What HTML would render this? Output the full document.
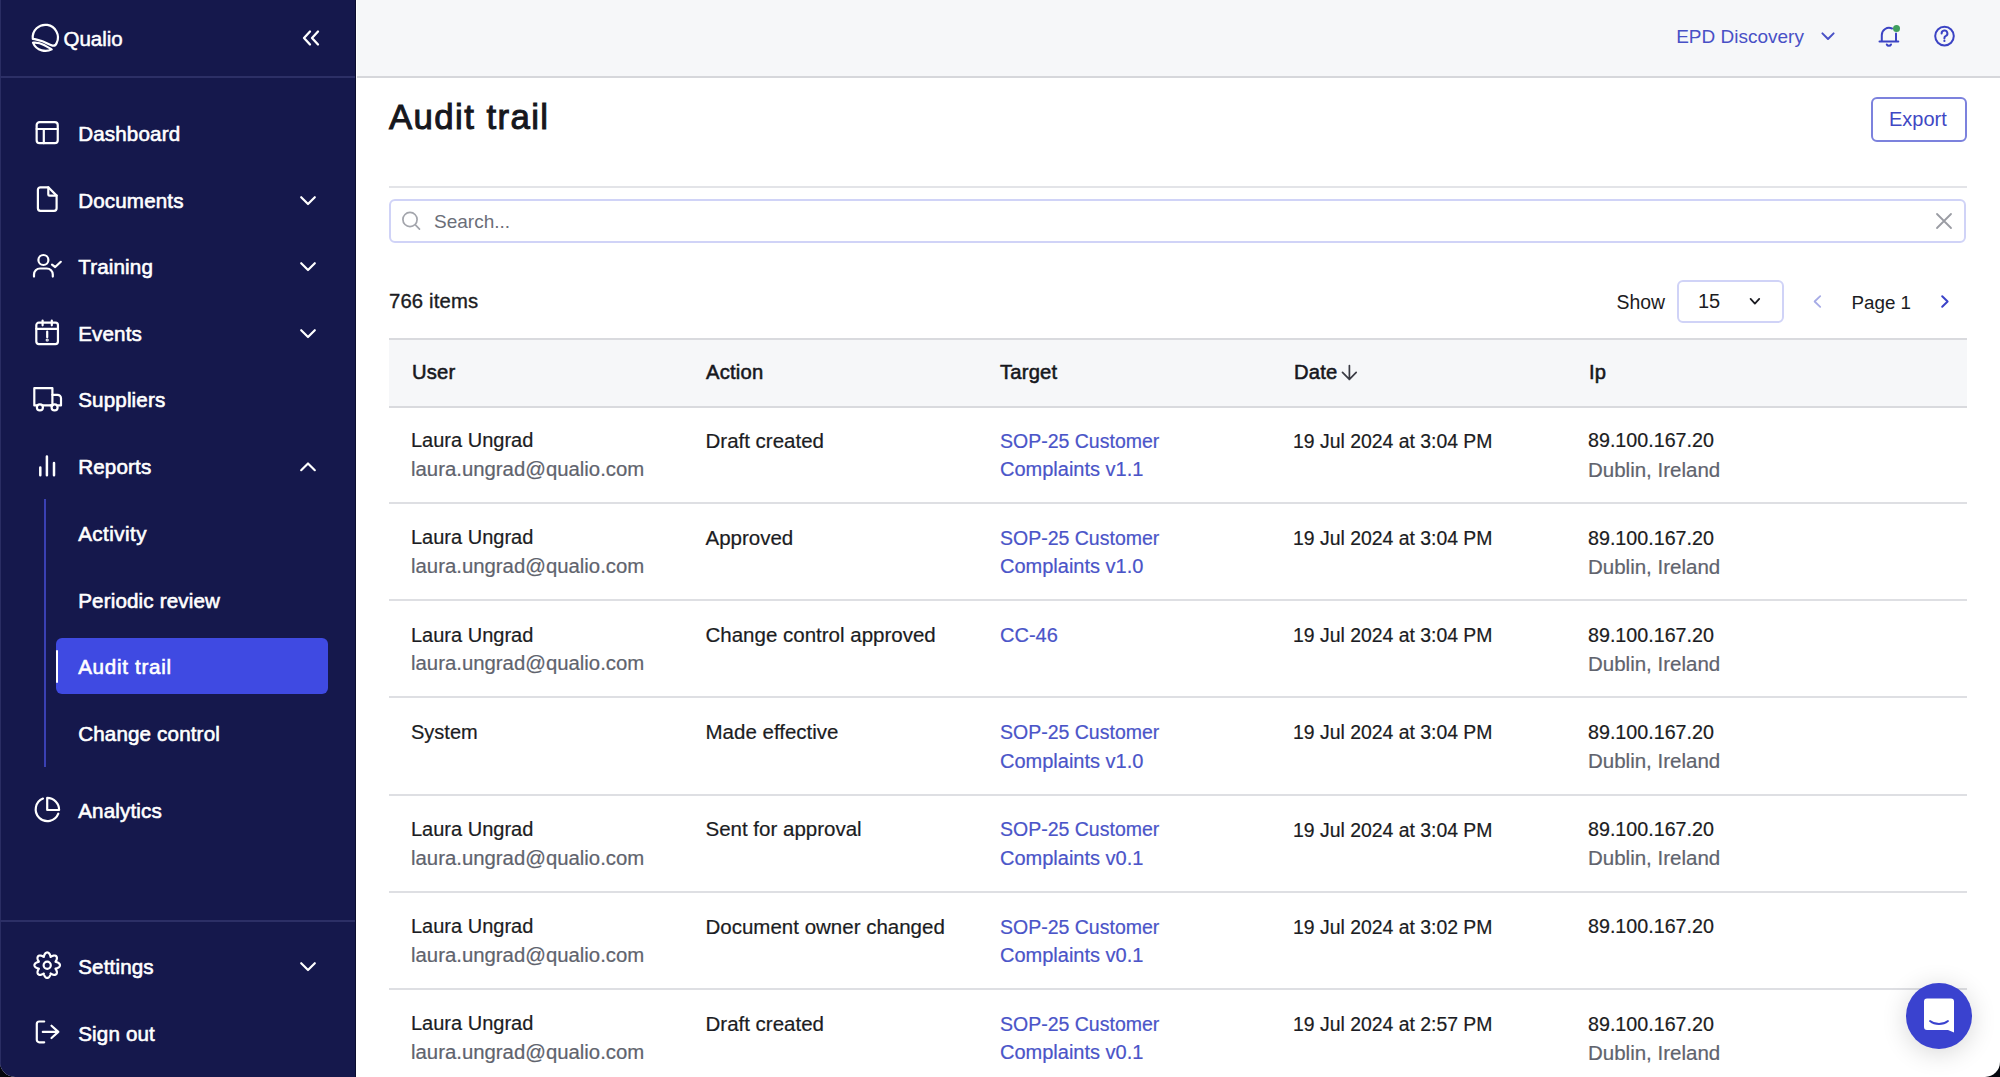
<!DOCTYPE html>
<html><head><meta charset="utf-8">
<style>
*{box-sizing:border-box;margin:0;padding:0}
html,body{width:2000px;height:1077px;overflow:hidden;background:#05070d;font-family:"Liberation Sans",sans-serif}
#win{position:absolute;left:0;top:0;width:2000px;height:1077px;overflow:hidden;border-radius:0 0 15px 15px;background:#fff}
.a{position:absolute;white-space:nowrap}
svg{position:absolute;overflow:visible}
</style></head><body><div id="win">
<div class="a" style="left:0;top:0;width:355px;height:1077px;background:#15184c"></div>
<div class="a" style="left:355px;top:0;width:1px;height:1077px;background:#0b0d2e"></div>
<div class="a" style="left:0;top:0;width:1px;height:1077px;background:#2a2d63"></div>
<div class="a" style="left:0;top:76px;width:355px;height:2px;background:#2c2f66"></div>
<div class="a" style="left:0;top:920px;width:355px;height:2px;background:#2c2f66"></div>
<svg style="left:30.5px;top:23.2px" width="30" height="30" viewBox="0 0 30 30" fill="none" stroke="#fff" stroke-width="2.2" stroke-linecap="round" stroke-linejoin="round">
<path d="M1.8 15.8 A12.6 12.6 0 1 1 25.8 19.6 C25 22 23.4 23.1 21.5 22.6 C17.5 21.6 13.5 18.4 9.4 17.6 C6.5 16.9 4 15.9 1.8 15.8 Z"/>
<path d="M2 19.7 C5.5 19.3 9 19.8 13 22 C16 23.6 18.5 25.2 20.7 26.4 C15.5 29.3 5.5 28.5 2 19.7 Z"/>
</svg>
<div class="a" style="left:63.5px;top:26.08px;font-size:20.5px;line-height:25.62px;color:#ffffff;font-weight:normal;-webkit-text-stroke:0.5px #fff;">Qualio</div>
<svg style="left:302px;top:30px" width="20" height="16" viewBox="0 0 20 16" fill="none" stroke="#fff" stroke-width="2.3" stroke-linecap="round" stroke-linejoin="round">
<path d="M8 1.5 L2 8 L8 14.5"/><path d="M16 1.5 L10 8 L16 14.5"/></svg>
<div class="a" style="left:78.2px;top:121.18px;font-size:20.6px;line-height:25.75px;color:#ffffff;font-weight:normal;-webkit-text-stroke:0.6px #fff;letter-spacing:0.15px;">Dashboard</div>
<div class="a" style="left:78.2px;top:187.68px;font-size:20.6px;line-height:25.75px;color:#ffffff;font-weight:normal;-webkit-text-stroke:0.6px #fff;letter-spacing:0.15px;">Documents</div>
<div class="a" style="left:78.2px;top:254.18px;font-size:20.6px;line-height:25.75px;color:#ffffff;font-weight:normal;-webkit-text-stroke:0.6px #fff;letter-spacing:0.15px;">Training</div>
<div class="a" style="left:78.2px;top:320.68px;font-size:20.6px;line-height:25.75px;color:#ffffff;font-weight:normal;-webkit-text-stroke:0.6px #fff;letter-spacing:0.15px;">Events</div>
<div class="a" style="left:78.2px;top:387.18px;font-size:20.6px;line-height:25.75px;color:#ffffff;font-weight:normal;-webkit-text-stroke:0.6px #fff;letter-spacing:0.15px;">Suppliers</div>
<div class="a" style="left:78.2px;top:453.68px;font-size:20.6px;line-height:25.75px;color:#ffffff;font-weight:normal;-webkit-text-stroke:0.6px #fff;letter-spacing:0.15px;">Reports</div>
<svg style="left:300px;top:195.6px" width="16" height="9.5" viewBox="0 0 16 9.5" fill="none" stroke="#fff" stroke-width="2.2" stroke-linecap="round" stroke-linejoin="round"><path d="M1.2 1.2 L8 8 L14.8 1.2"/></svg>
<svg style="left:300px;top:262.1px" width="16" height="9.5" viewBox="0 0 16 9.5" fill="none" stroke="#fff" stroke-width="2.2" stroke-linecap="round" stroke-linejoin="round"><path d="M1.2 1.2 L8 8 L14.8 1.2"/></svg>
<svg style="left:300px;top:328.6px" width="16" height="9.5" viewBox="0 0 16 9.5" fill="none" stroke="#fff" stroke-width="2.2" stroke-linecap="round" stroke-linejoin="round"><path d="M1.2 1.2 L8 8 L14.8 1.2"/></svg>
<svg style="left:300px;top:461.6px" width="16" height="9.5" viewBox="0 0 16 9.5" fill="none" stroke="#fff" stroke-width="2.2" stroke-linecap="round" stroke-linejoin="round"><path d="M1.2 8.2 L8 1.5 L14.8 8.2"/></svg>
<svg style="left:35px;top:120px" width="25" height="25" viewBox="0 0 25 25" fill="none" stroke="#fff" stroke-width="2.2" stroke-linecap="round" stroke-linejoin="round"><rect x="1.65" y="2.05" width="21.1" height="21.1" rx="3"/><path d="M1.65 9 H22.75 M8.8 9 V23.15"/></svg>
<svg style="left:35px;top:185px" width="25" height="28" viewBox="0 0 25 28" fill="none" stroke="#fff" stroke-width="2.2" stroke-linecap="round" stroke-linejoin="round"><path d="M13.3 2.3 H5.4 A2.5 2.5 0 0 0 2.9 4.8 V23.3 A2.5 2.5 0 0 0 5.4 25.8 H19.1 A2.5 2.5 0 0 0 21.6 23.3 V10.6 Z"/><path d="M13.3 2.3 V9.4 A1.2 1.2 0 0 0 14.5 10.6 H21.6"/></svg>
<svg style="left:32px;top:253px" width="31" height="26" viewBox="0 0 31 26" fill="none" stroke="#fff" stroke-width="2.2" stroke-linecap="round" stroke-linejoin="round"><circle cx="11.4" cy="7" r="5"/><path d="M2 23.6 V21.5 A6 6 0 0 1 8 15.5 H14.8 A6 6 0 0 1 20.8 21.5 V23.6"/><path d="M20 11.6 L23.2 14 L28.8 8.8"/></svg>
<svg style="left:34px;top:318px" width="27" height="28" viewBox="0 0 27 28" fill="none" stroke="#fff" stroke-width="2.2" stroke-linecap="round" stroke-linejoin="round"><rect x="2.3" y="4.7" width="21.65" height="21.4" rx="2.5"/><path d="M2.3 10.8 H23.95 M8.6 2.6 V7.3 M17.8 2.6 V7.3 M13.2 13.6 V19.2"/><circle cx="13.2" cy="22" r="0.5" fill="#fff"/></svg>
<svg style="left:32px;top:386px" width="31" height="27" viewBox="0 0 31 27" fill="none" stroke="#fff" stroke-width="2.2" stroke-linecap="round" stroke-linejoin="round"><path d="M5 19.4 H2.3 V2.2 H20.4 V19.4 H11"/><path d="M20.4 8.8 H25.5 A3.5 3.5 0 0 1 29 12.3 V19.4 H26.4 M20.4 19.4 H18.5"/><circle cx="7.9" cy="21.4" r="3"/><circle cx="22.6" cy="21.4" r="3"/></svg>
<svg style="left:38.4px;top:454px" width="19" height="23" viewBox="0 0 19 23" stroke="#fff" stroke-width="2.5" stroke-linecap="round" fill="none"><path d="M2.3 13.6 V21.3 M8.9 2.5 V21.3 M16 9 V21.3"/></svg>
<div class="a" style="left:44px;top:499px;width:2px;height:268px;background:#3a40b3"></div>
<div class="a" style="left:55.5px;top:638.4px;width:272.5px;height:55.3px;background:#3f4ae2;border-radius:6px"></div>
<div class="a" style="left:55.6px;top:649.5px;width:2.8px;height:33.5px;background:#fff;border-radius:2px"></div>
<div class="a" style="left:78.2px;top:521.18px;font-size:20.6px;line-height:25.75px;color:#ffffff;font-weight:normal;-webkit-text-stroke:0.6px #fff;letter-spacing:0.45px;">Activity</div>
<div class="a" style="left:78.2px;top:587.68px;font-size:20.6px;line-height:25.75px;color:#ffffff;font-weight:normal;-webkit-text-stroke:0.6px #fff;letter-spacing:0.15px;">Periodic review</div>
<div class="a" style="left:78.2px;top:654.18px;font-size:20.6px;line-height:25.75px;color:#ffffff;font-weight:normal;-webkit-text-stroke:0.6px #fff;letter-spacing:0.7px;">Audit trail</div>
<div class="a" style="left:78.2px;top:720.68px;font-size:20.6px;line-height:25.75px;color:#ffffff;font-weight:normal;-webkit-text-stroke:0.6px #fff;letter-spacing:0.15px;">Change control</div>
<div class="a" style="left:78.2px;top:797.98px;font-size:20.6px;line-height:25.75px;color:#ffffff;font-weight:normal;-webkit-text-stroke:0.6px #fff;letter-spacing:0.15px;">Analytics</div>
<svg style="left:33px;top:796px" width="28" height="28" viewBox="0 0 28 28" fill="none" stroke="#fff" stroke-width="2.2" stroke-linecap="round" stroke-linejoin="round"><path d="M10 2.6 A11.7 11.7 0 1 0 25.3 17.7"/><path d="M14.2 1.9 V14 H26.1 A11.9 11.9 0 0 0 14.2 1.9 Z"/></svg>
<div class="a" style="left:78.2px;top:954.18px;font-size:20.6px;line-height:25.75px;color:#ffffff;font-weight:normal;-webkit-text-stroke:0.6px #fff;letter-spacing:0.15px;">Settings</div>
<svg style="left:300px;top:962.1px" width="16" height="9.5" viewBox="0 0 16 9.5" fill="none" stroke="#fff" stroke-width="2.2" stroke-linecap="round" stroke-linejoin="round"><path d="M1.2 1.2 L8 8 L14.8 1.2"/></svg>
<svg style="left:33px;top:951px" width="29" height="29" viewBox="0 0 29 29" fill="none" stroke="#fff" stroke-width="2.2" stroke-linecap="round" stroke-linejoin="round"><path d="M14.20 1.45 L14.53 1.48 L14.86 1.56 L15.18 1.69 L15.50 1.87 L15.79 2.10 L16.07 2.38 L16.33 2.69 L16.57 3.04 L16.79 3.42 L16.98 3.82 L17.15 4.23 L17.30 4.66 L17.43 5.09 L17.54 5.51 L17.64 5.89 L17.99 5.69 L18.36 5.48 L18.75 5.26 L19.16 5.07 L19.57 4.89 L19.99 4.74 L20.41 4.63 L20.83 4.55 L21.24 4.52 L21.63 4.52 L22.00 4.57 L22.35 4.66 L22.67 4.79 L22.96 4.97 L23.22 5.18 L23.43 5.44 L23.61 5.73 L23.74 6.05 L23.83 6.40 L23.88 6.77 L23.88 7.16 L23.85 7.57 L23.77 7.99 L23.66 8.41 L23.51 8.83 L23.33 9.24 L23.14 9.65 L22.92 10.04 L22.71 10.41 L22.51 10.76 L22.89 10.86 L23.31 10.97 L23.74 11.10 L24.17 11.25 L24.58 11.42 L24.98 11.61 L25.36 11.83 L25.71 12.07 L26.02 12.33 L26.30 12.61 L26.53 12.90 L26.71 13.22 L26.84 13.54 L26.92 13.87 L26.95 14.20 L26.92 14.53 L26.84 14.86 L26.71 15.18 L26.53 15.50 L26.30 15.79 L26.02 16.07 L25.71 16.33 L25.36 16.57 L24.98 16.79 L24.58 16.98 L24.17 17.15 L23.74 17.30 L23.31 17.43 L22.89 17.54 L22.51 17.64 L22.71 17.99 L22.92 18.36 L23.14 18.75 L23.33 19.16 L23.51 19.57 L23.66 19.99 L23.77 20.41 L23.85 20.83 L23.88 21.24 L23.88 21.63 L23.83 22.00 L23.74 22.35 L23.61 22.67 L23.43 22.96 L23.22 23.22 L22.96 23.43 L22.67 23.61 L22.35 23.74 L22.00 23.83 L21.63 23.88 L21.24 23.88 L20.83 23.85 L20.41 23.77 L19.99 23.66 L19.57 23.51 L19.16 23.33 L18.75 23.14 L18.36 22.92 L17.99 22.71 L17.64 22.51 L17.54 22.89 L17.43 23.31 L17.30 23.74 L17.15 24.17 L16.98 24.58 L16.79 24.98 L16.57 25.36 L16.33 25.71 L16.07 26.02 L15.79 26.30 L15.50 26.53 L15.18 26.71 L14.86 26.84 L14.53 26.92 L14.20 26.95 L13.87 26.92 L13.54 26.84 L13.22 26.71 L12.90 26.53 L12.61 26.30 L12.33 26.02 L12.07 25.71 L11.83 25.36 L11.61 24.98 L11.42 24.58 L11.25 24.17 L11.10 23.74 L10.97 23.31 L10.86 22.89 L10.76 22.51 L10.41 22.71 L10.04 22.92 L9.65 23.14 L9.24 23.33 L8.83 23.51 L8.41 23.66 L7.99 23.77 L7.57 23.85 L7.16 23.88 L6.77 23.88 L6.40 23.83 L6.05 23.74 L5.73 23.61 L5.44 23.43 L5.18 23.22 L4.97 22.96 L4.79 22.67 L4.66 22.35 L4.57 22.00 L4.52 21.63 L4.52 21.24 L4.55 20.83 L4.63 20.41 L4.74 19.99 L4.89 19.57 L5.07 19.16 L5.26 18.75 L5.48 18.36 L5.69 17.99 L5.89 17.64 L5.51 17.54 L5.09 17.43 L4.66 17.30 L4.23 17.15 L3.82 16.98 L3.42 16.79 L3.04 16.57 L2.69 16.33 L2.38 16.07 L2.10 15.79 L1.87 15.50 L1.69 15.18 L1.56 14.86 L1.48 14.53 L1.45 14.20 L1.48 13.87 L1.56 13.54 L1.69 13.22 L1.87 12.90 L2.10 12.61 L2.38 12.33 L2.69 12.07 L3.04 11.83 L3.42 11.61 L3.82 11.42 L4.23 11.25 L4.66 11.10 L5.09 10.97 L5.51 10.86 L5.89 10.76 L5.69 10.41 L5.48 10.04 L5.26 9.65 L5.07 9.24 L4.89 8.83 L4.74 8.41 L4.63 7.99 L4.55 7.57 L4.52 7.16 L4.52 6.77 L4.57 6.40 L4.66 6.05 L4.79 5.73 L4.97 5.44 L5.18 5.18 L5.44 4.97 L5.73 4.79 L6.05 4.66 L6.40 4.57 L6.77 4.52 L7.16 4.52 L7.57 4.55 L7.99 4.63 L8.41 4.74 L8.83 4.89 L9.24 5.07 L9.65 5.26 L10.04 5.48 L10.41 5.69 L10.76 5.89 L10.86 5.51 L10.97 5.09 L11.10 4.66 L11.25 4.23 L11.42 3.82 L11.61 3.42 L11.83 3.04 L12.07 2.69 L12.33 2.38 L12.61 2.10 L12.90 1.87 L13.22 1.69 L13.54 1.56 L13.87 1.48 Z"/><circle cx="14.2" cy="14.2" r="3.6"/></svg>
<div class="a" style="left:78.2px;top:1020.58px;font-size:20.6px;line-height:25.75px;color:#ffffff;font-weight:normal;-webkit-text-stroke:0.6px #fff;letter-spacing:0.15px;">Sign out</div>
<svg style="left:34px;top:1018px" width="27" height="27" viewBox="0 0 27 27" fill="none" stroke="#fff" stroke-width="2.2" stroke-linecap="round" stroke-linejoin="round"><path d="M10.2 3.5 H5.3 A2.5 2.5 0 0 0 2.8 6 V21.8 A2.5 2.5 0 0 0 5.3 24.3 H10.2"/><path d="M8.8 13.9 H24.3 M17.5 7.7 L24.3 13.9 L17.5 20"/></svg>
<div class="a" style="left:357px;top:0;width:1643px;height:76px;background:#f6f7f9"></div>
<div class="a" style="left:357px;top:76px;width:1643px;height:2px;background:#d6d7db"></div>
<div class="a" style="left:1676.2px;top:25.14px;font-size:19px;line-height:23.75px;color:#4850c6;font-weight:normal;">EPD Discovery</div>
<svg style="left:1820px;top:31px" width="16" height="10" viewBox="0 0 16 10" fill="none" stroke="#4850c6" stroke-width="2" stroke-linecap="round" stroke-linejoin="round"><path d="M2.4 2.4 L8 8 L13.6 2.4"/></svg>
<svg style="left:1876px;top:24px" width="26" height="24" viewBox="0 0 26 24" fill="none" stroke="#3b43c4" stroke-width="2" stroke-linecap="round" stroke-linejoin="round"><path d="M3.5 17.6 H22.3 M5.8 17.4 V11 A7.2 7.2 0 0 1 16 4.5 M20 9.5 V17.4"/><path d="M10.8 20.5 A2.3 2.3 0 0 0 15 20.5"/></svg>
<div class="a" style="left:1892.8px;top:25.1px;width:7px;height:7px;border-radius:50%;background:#3f9f5e"></div>
<svg style="left:1932px;top:24px" width="25" height="25" viewBox="0 0 25 25" fill="none" stroke="#3b43c4" stroke-width="2" stroke-linecap="round" stroke-linejoin="round"><circle cx="12.5" cy="12.1" r="9.3"/><path d="M9.6 9.4 A2.9 2.9 0 1 1 13.6 12.1 C12.8 12.5 12.4 13 12.4 13.9 V14.5"/><circle cx="12.4" cy="16.9" r="1.1" fill="#3b43c4" stroke="none"/></svg>
<div class="a" style="left:389px;top:94.98px;font-size:34.8px;line-height:43.5px;color:#16171d;font-weight:normal;-webkit-text-stroke:1px #16171d;letter-spacing:1.4px;">Audit trail</div>
<div class="a" style="left:1871px;top:97px;width:95.5px;height:44.5px;border:2px solid #7c82dd;border-radius:6px;background:#fff"></div>
<div class="a" style="left:1889px;top:106.97px;font-size:20px;line-height:25.0px;color:#3f48c4;font-weight:normal;">Export</div>
<div class="a" style="left:389px;top:185.8px;width:1577.5px;height:2px;background:#e3e4e8"></div>
<div class="a" style="left:389px;top:198.6px;width:1577px;height:44px;border:2px solid #d0d3f7;border-radius:6px;background:#fff"></div>
<svg style="left:400px;top:210px" width="24" height="24" viewBox="0 0 24 24" fill="none" stroke="#a3a5ac" stroke-width="1.7" stroke-linecap="round"><circle cx="10" cy="9.5" r="7.1"/><path d="M15.4 14.9 L19.5 19.2"/></svg>
<div class="a" style="left:434px;top:210.14px;font-size:19px;line-height:23.75px;color:#6b6e78;font-weight:normal;">Search...</div>
<svg style="left:1935px;top:212px" width="18" height="18" viewBox="0 0 18 18" fill="none" stroke="#9a9ca3" stroke-width="1.8" stroke-linecap="round"><path d="M2 2 L16 16 M16 2 L2 16"/></svg>
<div class="a" style="left:389px;top:289.47px;font-size:20.3px;line-height:25.38px;color:#1b1c22;font-weight:normal;-webkit-text-stroke:0.35px #1b1c22;letter-spacing:0.15px;">766 items</div>
<div class="a" style="left:1616.5px;top:289.95px;font-size:19.4px;line-height:24.25px;color:#1b1c22;font-weight:normal;">Show</div>
<div class="a" style="left:1677px;top:279.5px;width:106.5px;height:43.5px;border:2px solid #d0d3f7;border-radius:6px;background:#fff"></div>
<div class="a" style="left:1698px;top:289.37px;font-size:20px;line-height:25.0px;color:#1b1c22;font-weight:normal;">15</div>
<svg style="left:1747px;top:296px" width="15" height="11" viewBox="0 0 15 11" fill="none" stroke="#1b1c22" stroke-width="1.8" stroke-linecap="round" stroke-linejoin="round"><path d="M3.6 2.9 L7.9 7.6 L12.2 2.9"/></svg>
<svg style="left:1811px;top:293px" width="14" height="17" viewBox="0 0 14 17" fill="none" stroke="#a6abe6" stroke-width="1.8" stroke-linecap="round" stroke-linejoin="round"><path d="M9.2 3.2 L3.6 8.5 L9.2 13.8"/></svg>
<div class="a" style="left:1851.5px;top:290.53px;font-size:18.8px;line-height:23.5px;color:#1b1c22;font-weight:normal;">Page 1</div>
<svg style="left:1938px;top:293px" width="14" height="17" viewBox="0 0 14 17" fill="none" stroke="#3b43c8" stroke-width="2" stroke-linecap="round" stroke-linejoin="round"><path d="M4.2 3.2 L9.6 8.5 L4.2 13.8"/></svg>
<div class="a" style="left:389px;top:337.5px;width:1578px;height:70px;background:#f6f7f9;border-top:2px solid #d9dade;border-bottom:2px solid #d9dade"></div>
<div class="a" style="left:412px;top:359.77px;font-size:20.2px;line-height:25.25px;color:#16171d;font-weight:normal;-webkit-text-stroke:0.55px #16171d;letter-spacing:0.2px;">User</div>
<div class="a" style="left:706px;top:359.77px;font-size:20.2px;line-height:25.25px;color:#16171d;font-weight:normal;-webkit-text-stroke:0.55px #16171d;letter-spacing:0.2px;">Action</div>
<div class="a" style="left:1000px;top:359.77px;font-size:20.2px;line-height:25.25px;color:#16171d;font-weight:normal;-webkit-text-stroke:0.55px #16171d;letter-spacing:0.2px;">Target</div>
<div class="a" style="left:1294px;top:359.77px;font-size:20.2px;line-height:25.25px;color:#16171d;font-weight:normal;-webkit-text-stroke:0.55px #16171d;letter-spacing:0.2px;">Date</div>
<div class="a" style="left:1589px;top:359.77px;font-size:20.2px;line-height:25.25px;color:#16171d;font-weight:normal;-webkit-text-stroke:0.55px #16171d;letter-spacing:0.2px;">Ip</div>
<svg style="left:1339px;top:362px" width="20" height="20" viewBox="0 0 20 20" fill="none" stroke="#3a3b44" stroke-width="1.7" stroke-linecap="round" stroke-linejoin="round"><path d="M10.4 3.5 V17.4 M3.5 10.3 L10.4 17.4 L17.2 10.3"/></svg>
<div class="a" style="left:411px;top:428.17px;font-size:20px;line-height:25.0px;color:#1b1c22;font-weight:normal;-webkit-text-stroke:0.2px #1b1c22;">Laura Ungrad</div>
<div class="a" style="left:411px;top:456.82px;font-size:20.35px;line-height:25.44px;color:#60636d;font-weight:normal;-webkit-text-stroke:0.2px #60636d;">laura.ungrad@qualio.com</div>
<div class="a" style="left:705.5px;top:427.68px;font-size:20.5px;line-height:25.62px;color:#1b1c22;font-weight:normal;-webkit-text-stroke:0.2px #1b1c22;">Draft created</div>
<div class="a" style="left:1000px;top:428.65px;font-size:19.5px;line-height:24.38px;color:#4a54c8;font-weight:normal;-webkit-text-stroke:0.2px #4a54c8;">SOP-25 Customer</div>
<div class="a" style="left:1000px;top:457.17px;font-size:20px;line-height:25.0px;color:#4a54c8;font-weight:normal;-webkit-text-stroke:0.2px #4a54c8;">Complaints v1.1</div>
<div class="a" style="left:1293px;top:428.75px;font-size:19.4px;line-height:24.25px;color:#1b1c22;font-weight:normal;-webkit-text-stroke:0.2px #1b1c22;">19 Jul 2024 at 3:04 PM</div>
<div class="a" style="left:1588px;top:428.46px;font-size:19.7px;line-height:24.62px;color:#1b1c22;font-weight:normal;-webkit-text-stroke:0.2px #1b1c22;">89.100.167.20</div>
<div class="a" style="left:1588px;top:456.68px;font-size:20.5px;line-height:25.62px;color:#60636d;font-weight:normal;-webkit-text-stroke:0.2px #60636d;">Dublin, Ireland</div>
<div class="a" style="left:389px;top:502.0px;width:1578px;height:2px;background:#dedfe3"></div>
<div class="a" style="left:411px;top:525.37px;font-size:20px;line-height:25.0px;color:#1b1c22;font-weight:normal;-webkit-text-stroke:0.2px #1b1c22;">Laura Ungrad</div>
<div class="a" style="left:411px;top:554.02px;font-size:20.35px;line-height:25.44px;color:#60636d;font-weight:normal;-webkit-text-stroke:0.2px #60636d;">laura.ungrad@qualio.com</div>
<div class="a" style="left:705.5px;top:524.88px;font-size:20.5px;line-height:25.62px;color:#1b1c22;font-weight:normal;-webkit-text-stroke:0.2px #1b1c22;">Approved</div>
<div class="a" style="left:1000px;top:525.85px;font-size:19.5px;line-height:24.38px;color:#4a54c8;font-weight:normal;-webkit-text-stroke:0.2px #4a54c8;">SOP-25 Customer</div>
<div class="a" style="left:1000px;top:554.37px;font-size:20px;line-height:25.0px;color:#4a54c8;font-weight:normal;-webkit-text-stroke:0.2px #4a54c8;">Complaints v1.0</div>
<div class="a" style="left:1293px;top:525.95px;font-size:19.4px;line-height:24.25px;color:#1b1c22;font-weight:normal;-webkit-text-stroke:0.2px #1b1c22;">19 Jul 2024 at 3:04 PM</div>
<div class="a" style="left:1588px;top:525.66px;font-size:19.7px;line-height:24.62px;color:#1b1c22;font-weight:normal;-webkit-text-stroke:0.2px #1b1c22;">89.100.167.20</div>
<div class="a" style="left:1588px;top:553.88px;font-size:20.5px;line-height:25.62px;color:#60636d;font-weight:normal;-webkit-text-stroke:0.2px #60636d;">Dublin, Ireland</div>
<div class="a" style="left:389px;top:599.2px;width:1578px;height:2px;background:#dedfe3"></div>
<div class="a" style="left:411px;top:622.57px;font-size:20px;line-height:25.0px;color:#1b1c22;font-weight:normal;-webkit-text-stroke:0.2px #1b1c22;">Laura Ungrad</div>
<div class="a" style="left:411px;top:651.22px;font-size:20.35px;line-height:25.44px;color:#60636d;font-weight:normal;-webkit-text-stroke:0.2px #60636d;">laura.ungrad@qualio.com</div>
<div class="a" style="left:705.5px;top:622.08px;font-size:20.5px;line-height:25.62px;color:#1b1c22;font-weight:normal;-webkit-text-stroke:0.2px #1b1c22;">Change control approved</div>
<div class="a" style="left:1000px;top:622.57px;font-size:20px;line-height:25.0px;color:#4a54c8;font-weight:normal;-webkit-text-stroke:0.2px #4a54c8;">CC-46</div>
<div class="a" style="left:1293px;top:623.15px;font-size:19.4px;line-height:24.25px;color:#1b1c22;font-weight:normal;-webkit-text-stroke:0.2px #1b1c22;">19 Jul 2024 at 3:04 PM</div>
<div class="a" style="left:1588px;top:622.86px;font-size:19.7px;line-height:24.62px;color:#1b1c22;font-weight:normal;-webkit-text-stroke:0.2px #1b1c22;">89.100.167.20</div>
<div class="a" style="left:1588px;top:651.08px;font-size:20.5px;line-height:25.62px;color:#60636d;font-weight:normal;-webkit-text-stroke:0.2px #60636d;">Dublin, Ireland</div>
<div class="a" style="left:389px;top:696.4px;width:1578px;height:2px;background:#dedfe3"></div>
<div class="a" style="left:411px;top:719.77px;font-size:20px;line-height:25.0px;color:#1b1c22;font-weight:normal;-webkit-text-stroke:0.2px #1b1c22;">System</div>
<div class="a" style="left:705.5px;top:719.28px;font-size:20.5px;line-height:25.62px;color:#1b1c22;font-weight:normal;-webkit-text-stroke:0.2px #1b1c22;">Made effective</div>
<div class="a" style="left:1000px;top:720.25px;font-size:19.5px;line-height:24.38px;color:#4a54c8;font-weight:normal;-webkit-text-stroke:0.2px #4a54c8;">SOP-25 Customer</div>
<div class="a" style="left:1000px;top:748.77px;font-size:20px;line-height:25.0px;color:#4a54c8;font-weight:normal;-webkit-text-stroke:0.2px #4a54c8;">Complaints v1.0</div>
<div class="a" style="left:1293px;top:720.35px;font-size:19.4px;line-height:24.25px;color:#1b1c22;font-weight:normal;-webkit-text-stroke:0.2px #1b1c22;">19 Jul 2024 at 3:04 PM</div>
<div class="a" style="left:1588px;top:720.06px;font-size:19.7px;line-height:24.62px;color:#1b1c22;font-weight:normal;-webkit-text-stroke:0.2px #1b1c22;">89.100.167.20</div>
<div class="a" style="left:1588px;top:748.28px;font-size:20.5px;line-height:25.62px;color:#60636d;font-weight:normal;-webkit-text-stroke:0.2px #60636d;">Dublin, Ireland</div>
<div class="a" style="left:389px;top:793.6px;width:1578px;height:2px;background:#dedfe3"></div>
<div class="a" style="left:411px;top:816.97px;font-size:20px;line-height:25.0px;color:#1b1c22;font-weight:normal;-webkit-text-stroke:0.2px #1b1c22;">Laura Ungrad</div>
<div class="a" style="left:411px;top:845.62px;font-size:20.35px;line-height:25.44px;color:#60636d;font-weight:normal;-webkit-text-stroke:0.2px #60636d;">laura.ungrad@qualio.com</div>
<div class="a" style="left:705.5px;top:816.48px;font-size:20.5px;line-height:25.62px;color:#1b1c22;font-weight:normal;-webkit-text-stroke:0.2px #1b1c22;">Sent for approval</div>
<div class="a" style="left:1000px;top:817.45px;font-size:19.5px;line-height:24.38px;color:#4a54c8;font-weight:normal;-webkit-text-stroke:0.2px #4a54c8;">SOP-25 Customer</div>
<div class="a" style="left:1000px;top:845.97px;font-size:20px;line-height:25.0px;color:#4a54c8;font-weight:normal;-webkit-text-stroke:0.2px #4a54c8;">Complaints v0.1</div>
<div class="a" style="left:1293px;top:817.55px;font-size:19.4px;line-height:24.25px;color:#1b1c22;font-weight:normal;-webkit-text-stroke:0.2px #1b1c22;">19 Jul 2024 at 3:04 PM</div>
<div class="a" style="left:1588px;top:817.26px;font-size:19.7px;line-height:24.62px;color:#1b1c22;font-weight:normal;-webkit-text-stroke:0.2px #1b1c22;">89.100.167.20</div>
<div class="a" style="left:1588px;top:845.48px;font-size:20.5px;line-height:25.62px;color:#60636d;font-weight:normal;-webkit-text-stroke:0.2px #60636d;">Dublin, Ireland</div>
<div class="a" style="left:389px;top:890.8px;width:1578px;height:2px;background:#dedfe3"></div>
<div class="a" style="left:411px;top:914.17px;font-size:20px;line-height:25.0px;color:#1b1c22;font-weight:normal;-webkit-text-stroke:0.2px #1b1c22;">Laura Ungrad</div>
<div class="a" style="left:411px;top:942.82px;font-size:20.35px;line-height:25.44px;color:#60636d;font-weight:normal;-webkit-text-stroke:0.2px #60636d;">laura.ungrad@qualio.com</div>
<div class="a" style="left:705.5px;top:913.68px;font-size:20.5px;line-height:25.62px;color:#1b1c22;font-weight:normal;-webkit-text-stroke:0.2px #1b1c22;">Document owner changed</div>
<div class="a" style="left:1000px;top:914.65px;font-size:19.5px;line-height:24.38px;color:#4a54c8;font-weight:normal;-webkit-text-stroke:0.2px #4a54c8;">SOP-25 Customer</div>
<div class="a" style="left:1000px;top:943.17px;font-size:20px;line-height:25.0px;color:#4a54c8;font-weight:normal;-webkit-text-stroke:0.2px #4a54c8;">Complaints v0.1</div>
<div class="a" style="left:1293px;top:914.75px;font-size:19.4px;line-height:24.25px;color:#1b1c22;font-weight:normal;-webkit-text-stroke:0.2px #1b1c22;">19 Jul 2024 at 3:02 PM</div>
<div class="a" style="left:1588px;top:914.46px;font-size:19.7px;line-height:24.62px;color:#1b1c22;font-weight:normal;-webkit-text-stroke:0.2px #1b1c22;">89.100.167.20</div>
<div class="a" style="left:389px;top:988.0px;width:1578px;height:2px;background:#dedfe3"></div>
<div class="a" style="left:411px;top:1011.37px;font-size:20px;line-height:25.0px;color:#1b1c22;font-weight:normal;-webkit-text-stroke:0.2px #1b1c22;">Laura Ungrad</div>
<div class="a" style="left:411px;top:1040.02px;font-size:20.35px;line-height:25.44px;color:#60636d;font-weight:normal;-webkit-text-stroke:0.2px #60636d;">laura.ungrad@qualio.com</div>
<div class="a" style="left:705.5px;top:1010.88px;font-size:20.5px;line-height:25.62px;color:#1b1c22;font-weight:normal;-webkit-text-stroke:0.2px #1b1c22;">Draft created</div>
<div class="a" style="left:1000px;top:1011.85px;font-size:19.5px;line-height:24.38px;color:#4a54c8;font-weight:normal;-webkit-text-stroke:0.2px #4a54c8;">SOP-25 Customer</div>
<div class="a" style="left:1000px;top:1040.37px;font-size:20px;line-height:25.0px;color:#4a54c8;font-weight:normal;-webkit-text-stroke:0.2px #4a54c8;">Complaints v0.1</div>
<div class="a" style="left:1293px;top:1011.95px;font-size:19.4px;line-height:24.25px;color:#1b1c22;font-weight:normal;-webkit-text-stroke:0.2px #1b1c22;">19 Jul 2024 at 2:57 PM</div>
<div class="a" style="left:1588px;top:1011.66px;font-size:19.7px;line-height:24.62px;color:#1b1c22;font-weight:normal;-webkit-text-stroke:0.2px #1b1c22;">89.100.167.20</div>
<div class="a" style="left:1588px;top:1039.88px;font-size:20.5px;line-height:25.62px;color:#60636d;font-weight:normal;-webkit-text-stroke:0.2px #60636d;">Dublin, Ireland</div>
<div class="a" style="left:389px;top:1085.2px;width:1578px;height:2px;background:#dedfe3"></div>
<div class="a" style="left:1905.5px;top:983px;width:66.5px;height:66px;border-radius:50%;background:#3a42cf;box-shadow:0 4px 26px rgba(0,0,0,0.16)"></div>
<svg style="left:1922px;top:997px" width="34" height="38" viewBox="0 0 34 38" fill="#fff"><path d="M5 1.5 H29 A3 3 0 0 1 32 4.5 V35.5 L26 33 H5 A3 3 0 0 1 2 30 V4.5 A3 3 0 0 1 5 1.5 Z"/><path d="M8 24 C13 28 21 28 26 24" fill="none" stroke="#3a42cf" stroke-width="1.8" stroke-linecap="round"/></svg>
</div></body></html>
